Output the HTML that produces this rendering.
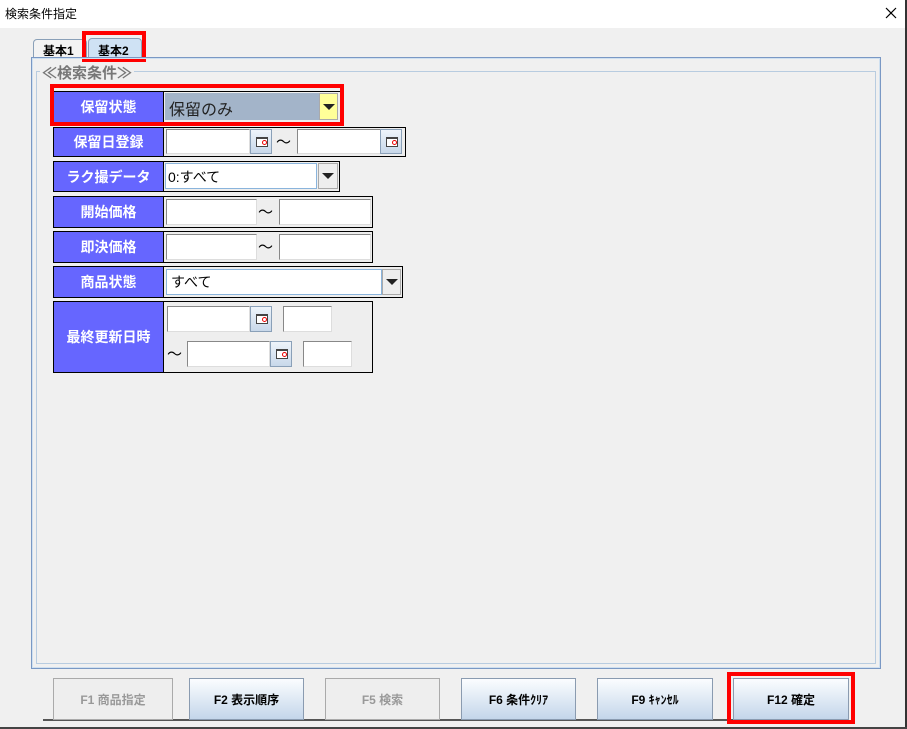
<!DOCTYPE html>
<html><head><meta charset="utf-8"><style>
*{box-sizing:border-box;margin:0;padding:0}
body{width:907px;height:729px;background:#f0f0f0;position:relative;overflow:hidden;font-family:"Liberation Sans","Noto Sans CJK JP",sans-serif;}
.a{position:absolute}
.title{left:0;top:0;width:905px;height:28px;background:#fff;font-size:12px;padding:5px 0 0 5px;color:#000}
.rb{border:4px solid #f00}
.lab{background:#6666ff;color:#fff;font-weight:bold;font-size:14px;display:flex;align-items:center;justify-content:center;border-right:1px solid #000}
.box{border:1px solid #000;background:#eee}
.fld{background:#fff;border-top:1px solid #888;border-left:1px solid #888;border-right:1px solid #ddd;border-bottom:1px solid #ddd}
.cal{background:linear-gradient(#eef4fa,#c8d8ea);border:1px solid #8aa0b8}
.cal::after{content:"";position:absolute;left:5px;top:7px;width:10px;height:7px;border:1px solid #444;border-top:2px solid #444;background:#fff}
.cal::before{content:"";position:absolute;left:11px;top:10px;width:3px;height:3px;border:1px solid #e00;border-radius:50%;z-index:2}
.tl{font-size:15px;color:#000}
.arr{background:#eee;border:1px solid #aaa}
.arr::after{content:"";position:absolute;left:50%;top:50%;margin:-3px 0 0 -6px;border-left:6px solid transparent;border-right:6px solid transparent;border-top:6px solid #222}
.btn{top:678px;height:42px;border:1px solid #8a9bb0;background:linear-gradient(#fbfdff,#c4d6ea);font-size:12px;font-weight:bold;display:flex;align-items:center;justify-content:center;color:#000}
.dis{background:#eeeeee;border-color:#aaa;color:#999}
</style></head><body>
<div class="a title">検索条件指定</div>
<svg class="a" style="left:885px;top:7px" width="12" height="12"><path d="M1 1L11 11M11 1L1 11" stroke="#000" stroke-width="1.2"/></svg>
<div class="a" style="left:905px;top:0;width:2px;height:729px;background:#333"></div>
<div class="a" style="left:0;top:727px;width:907px;height:2px;background:#444"></div>

<div class="a" style="left:33px;top:39px;width:54px;height:19px;border:1px solid #8aa0b8;border-bottom:none;border-radius:4px 4px 0 0;background:#f3f3f3;font-size:12px;font-weight:bold;padding:2px 0 0 9px">基本1</div>
<div class="a" style="left:88px;top:38px;width:54px;height:20px;border:1px solid #8aa0b8;border-bottom:none;border-radius:4px 4px 0 0;background:#cfe2f4;font-size:12px;font-weight:bold;padding:3px 0 0 9px">基本2</div>
<div class="a rb" style="left:82px;top:31px;width:64px;height:31px"></div>

<div class="a" style="left:31px;top:57px;width:850px;height:612px;border:1px solid #7a98c4;box-shadow:inset 0 0 0 1px #cfe0f0"></div>
<div class="a" style="left:36px;top:71px;width:840px;height:593px;border:1px solid #b8cce0"></div>
<div class="a" style="left:40px;top:62px;font-size:15px;font-weight:bold;color:#777;background:#f0f0f0;padding:0 2px">≪検索条件≫</div>

<!-- row1 -->
<div class="a box" style="left:53px;top:91px;width:288px;height:32px"></div>
<div class="a lab" style="left:54px;top:92px;width:110px;height:30px">保留状態</div>
<div class="a" style="left:165px;top:93px;width:154px;height:27px;background:#a3b4c9;font-size:16px;color:#222;padding:3px 0 0 4px">保留のみ</div>
<div class="a arr" style="left:319px;top:93px;width:19px;height:27px;background:#ffff99"></div>
<div class="a rb" style="left:50px;top:84px;width:294px;height:42px"></div>

<!-- row2 -->
<div class="a box" style="left:53px;top:127px;width:353px;height:30px"></div>
<div class="a lab" style="left:54px;top:128px;width:110px;height:28px">保留日登録</div>
<div class="a fld" style="left:166px;top:129px;width:84px;height:25px"></div>
<div class="a cal" style="left:250px;top:129px;width:22px;height:25px"></div>
<div class="a tl" style="left:276px;top:131px">～</div>
<div class="a fld" style="left:297px;top:129px;width:84px;height:25px"></div>
<div class="a cal" style="left:380px;top:129px;width:22px;height:25px"></div>

<!-- row3 -->
<div class="a box" style="left:53px;top:161px;width:287px;height:31px"></div>
<div class="a lab" style="left:54px;top:162px;width:110px;height:29px">ラク撮データ</div>
<div class="a" style="left:165px;top:163px;width:152px;height:26px;background:#fff;border:1px solid #8ab4dc;font-size:14px;padding:3px 0 0 2px">0:すべて</div>
<div class="a arr" style="left:318px;top:163px;width:20px;height:26px"></div>

<!-- row4 -->
<div class="a box" style="left:53px;top:196px;width:320px;height:32px"></div>
<div class="a lab" style="left:54px;top:197px;width:110px;height:30px">開始価格</div>
<div class="a fld" style="left:166px;top:199px;width:91px;height:26px"></div>
<div class="a tl" style="left:258px;top:201px">～</div>
<div class="a fld" style="left:279px;top:199px;width:92px;height:26px"></div>

<!-- row5 -->
<div class="a box" style="left:53px;top:231px;width:320px;height:32px"></div>
<div class="a lab" style="left:54px;top:232px;width:110px;height:30px">即決価格</div>
<div class="a fld" style="left:166px;top:234px;width:91px;height:26px"></div>
<div class="a tl" style="left:258px;top:236px">～</div>
<div class="a fld" style="left:279px;top:234px;width:92px;height:26px"></div>

<!-- row6 -->
<div class="a box" style="left:53px;top:266px;width:350px;height:32px"></div>
<div class="a lab" style="left:54px;top:267px;width:110px;height:30px">商品状態</div>
<div class="a" style="left:166px;top:269px;width:216px;height:26px;background:#fff;border:1px solid #8ab4dc;font-size:14px;padding:2px 0 0 4px">すべて</div>
<div class="a arr" style="left:382px;top:269px;width:19px;height:26px"></div>

<!-- row7 -->
<div class="a box" style="left:53px;top:301px;width:320px;height:72px"></div>
<div class="a lab" style="left:54px;top:302px;width:110px;height:70px">最終更新日時</div>
<div class="a fld" style="left:167px;top:306px;width:83px;height:26px"></div>
<div class="a cal" style="left:250px;top:306px;width:22px;height:26px"></div>
<div class="a fld" style="left:283px;top:306px;width:49px;height:26px"></div>
<div class="a tl" style="left:167px;top:343px">～</div>
<div class="a fld" style="left:187px;top:341px;width:83px;height:26px"></div>
<div class="a cal" style="left:270px;top:341px;width:22px;height:26px"></div>
<div class="a fld" style="left:303px;top:341px;width:49px;height:26px"></div>

<!-- buttons -->
<div class="a" style="left:43px;top:719px;width:793px;height:2px;background:#555"></div>
<div class="a btn dis" style="left:53px;width:120px">F1 商品指定</div>
<div class="a btn" style="left:189px;width:115px">F2 表示順序</div>
<div class="a btn dis" style="left:325px;width:115px">F5 検索</div>
<div class="a btn" style="left:461px;width:115px">F6 条件ｸﾘｱ</div>
<div class="a btn" style="left:597px;width:116px">F9 ｷｬﾝｾﾙ</div>
<div class="a btn" style="left:733px;width:116px">F12 確定</div>
<div class="a rb" style="left:727px;top:672px;width:128px;height:52px"></div>
</body></html>
